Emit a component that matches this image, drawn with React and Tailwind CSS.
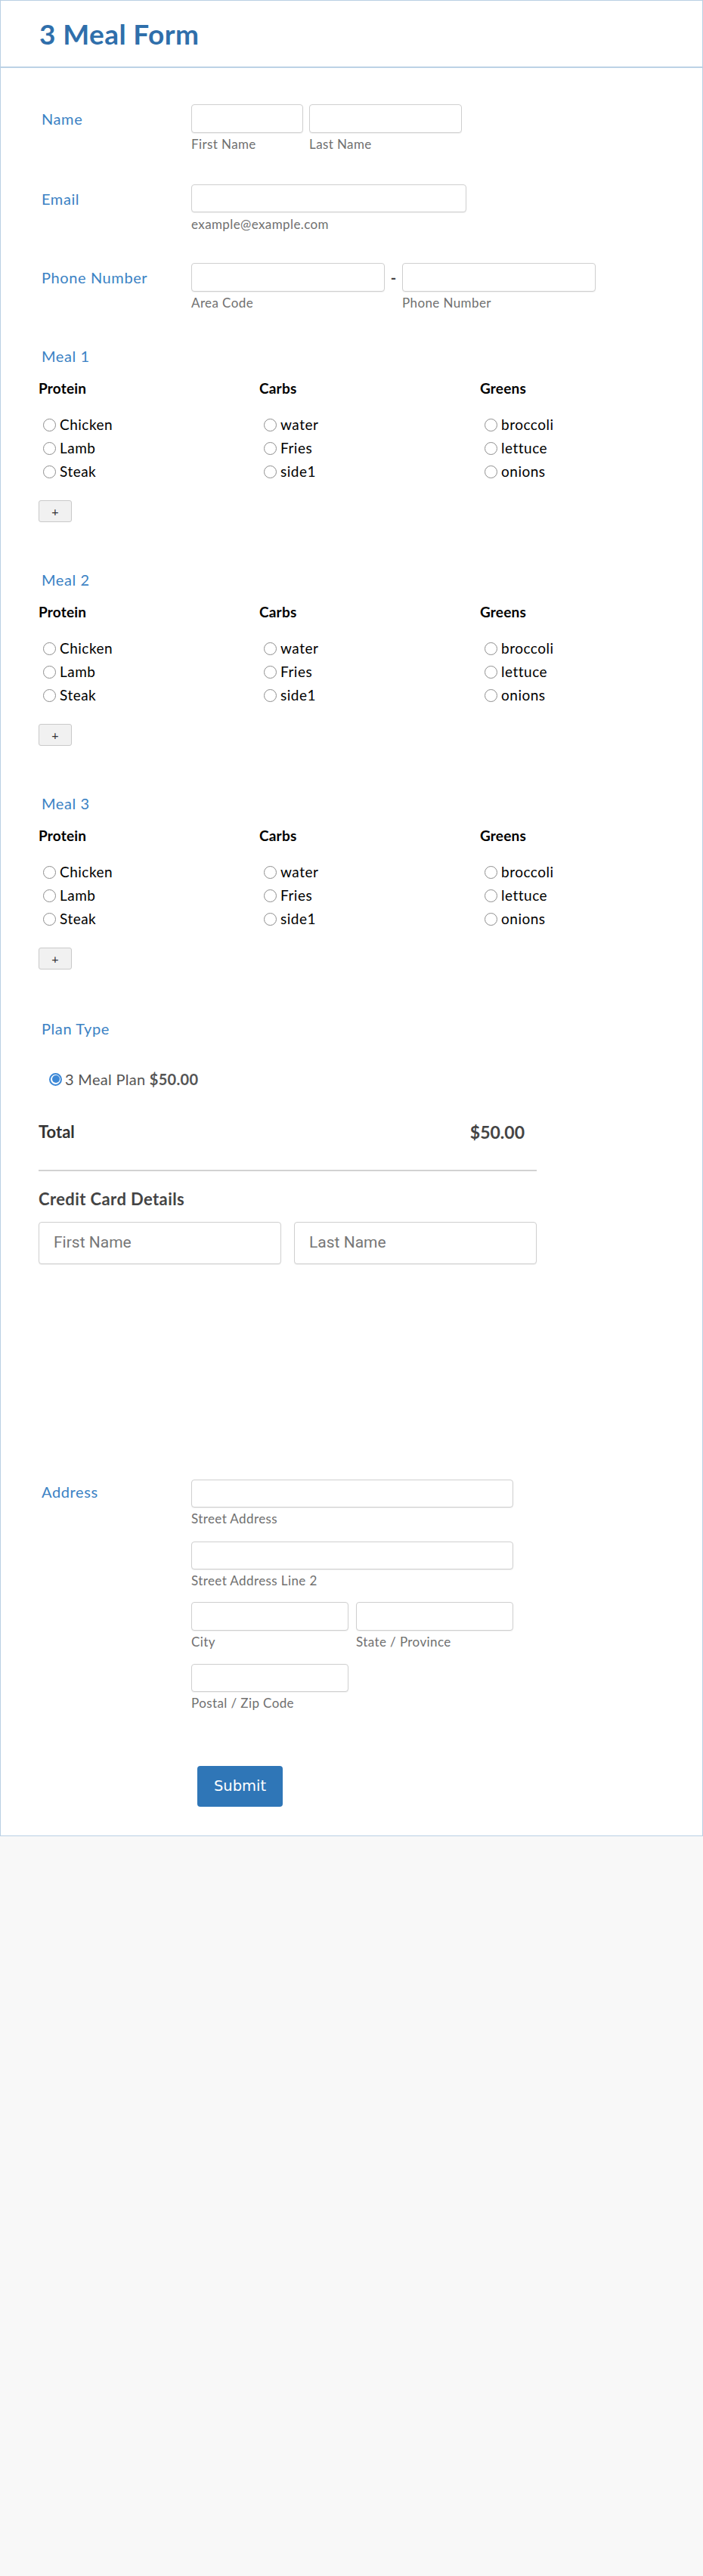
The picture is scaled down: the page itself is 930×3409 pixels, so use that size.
import React from 'react';

const inputCls = 'block bg-white border border-[#cfcfcf] rounded-[4px] shadow-[0_1px_1px_rgba(0,0,0,0.06)]';
const sub = 'block mt-[5px] text-[17px] leading-[20px] tracking-[0.4px] text-[#707070]';
const label = 'text-[20px] leading-[24px] tracking-[0.6px] text-[#3b82c4]';

function Radio() {
    return <span className="inline-block w-[17px] h-[17px] rounded-full border border-[#8d8d8d] bg-white shrink-0" />;
}

function Meal({ n, first }) {
    const cols = [
        { title: 'Protein', items: ['Chicken', 'Lamb', 'Steak'] },
        { title: 'Carbs', items: ['water', 'Fries', 'side1'] },
        { title: 'Greens', items: ['broccoli', 'lettuce', 'onions'] },
    ];
    return (
        <div className={first ? 'mt-[48px]' : 'mt-[64px]'}>
            <div className={`${label} pl-[54px]`}>Meal {n}</div>
            <div className="grid grid-cols-[292px_292px_292px] pl-[50px] mt-[19px]">
                {cols.map((c) => (
                    <div key={c.title}>
                        <div className="text-[19px] leading-[24px] font-bold tracking-[0.2px] text-black">{c.title}</div>
                        <div className="mt-[21px]">
                            {c.items.map((it) => (
                                <div key={it} className="flex items-center h-[31px] pl-[6px] gap-[5px] text-[19px] tracking-[0.5px] text-black">
                                    <Radio />
                                    <span>{it}</span>
                                </div>
                            ))}
                        </div>
                    </div>
                ))}
            </div>
            <button className="ml-[50px] mt-[22px] w-[44px] h-[29px] bg-[#f1f1f1] border border-[#c9c9c9] rounded-[3px] text-[16px] leading-none text-[#333] flex items-center justify-center">
                +
            </button>
        </div>
    );
}

export default function App() {
    return (
        <div className="min-h-[3409px] bg-[#f8f8f8] font-['Lato',sans-serif]">
            <div className="bg-white border border-[#b9cfe4] pb-[38px]">
                {/* Header */}
                <div className="h-[89px] border-b-2 border-[#bcd2e6] flex items-center pl-[51px]">
                    <h1 className="text-[37px] font-bold tracking-[0.4px] text-[#2f6fab] leading-none">3 Meal Form</h1>
                </div>

                {/* Name */}
                <div className="flex pl-[54px] mt-[48px]">
                    <div className={`w-[198px] mt-[7px] ${label}`}>Name</div>
                    <div className="flex gap-[8px]">
                        <div>
                            <div className={`${inputCls} w-[148px] h-[38px]`} />
                            <span className={sub}>First Name</span>
                        </div>
                        <div>
                            <div className={`${inputCls} w-[202px] h-[38px]`} />
                            <span className={sub}>Last Name</span>
                        </div>
                    </div>
                </div>

                {/* Email */}
                <div className="flex pl-[54px] mt-[43px]">
                    <div className={`w-[198px] mt-[7px] ${label}`}>Email</div>
                    <div>
                        <div className={`${inputCls} w-[364px] h-[37px]`} />
                        <span className={`${sub} mt-[6px]`}>example@example.com</span>
                    </div>
                </div>

                {/* Phone */}
                <div className="flex pl-[54px] mt-[41px]">
                    <div className={`w-[198px] mt-[7px] ${label}`}>Phone Number</div>
                    <div className="flex">
                        <div>
                            <div className={`${inputCls} w-[256px] h-[38px]`} />
                            <span className={sub}>Area Code</span>
                        </div>
                        <div className="w-[23px] h-[38px] flex items-center justify-center text-[20px] font-bold text-[#444]">-</div>
                        <div>
                            <div className={`${inputCls} w-[256px] h-[38px]`} />
                            <span className={sub}>Phone Number</span>
                        </div>
                    </div>
                </div>

                <Meal n={1} first />
                <Meal n={2} />
                <Meal n={3} />

                {/* Plan type */}
                <div className={`${label} pl-[54px] mt-[66px]`}>Plan Type</div>
                <div className="flex items-center gap-[4px] pl-[64px] mt-[43px] text-[20px] leading-[24px] tracking-[0.3px] text-[#555]">
                    <span className="w-[17px] h-[17px] rounded-full border-2 border-[#3d88d6] bg-white flex items-center justify-center">
                        <span className="w-[10px] h-[10px] rounded-full bg-[#3d88d6]" />
                    </span>
                    <span>
                        3 Meal Plan <b className="font-bold">$50.00</b>
                    </span>
                </div>

                {/* Total */}
                <div className="ml-[50px] w-[659px] mt-[45px] flex justify-between items-end pr-[16px] font-bold text-[#333]">
                    <span className="text-[22px] leading-[26px]">Total</span>
                    <span className="text-[23px] leading-[26px] text-[#444]">$50.00</span>
                </div>
                <div className="ml-[50px] w-[659px] mt-[37px] h-[2px] bg-[#d2d2d2]" />

                {/* Credit card */}
                <div className="ml-[50px] mt-[24px] text-[22px] leading-[26px] font-bold tracking-[0.4px] text-[#444]">Credit Card Details</div>
                <div className="ml-[50px] mt-[17px] flex gap-[17px]">
                    <div className={`${inputCls} w-[321px] h-[56px] flex items-center pl-[19px] text-[21px] text-[#777] font-['Roboto',sans-serif]`}>First Name</div>
                    <div className={`${inputCls} w-[321px] h-[56px] flex items-center pl-[19px] text-[21px] text-[#777] font-['Roboto',sans-serif]`}>Last Name</div>
                </div>

                {/* Address */}
                <div className="flex pl-[54px] mt-[285px]">
                    <div className={`w-[198px] mt-[4px] ${label}`}>Address</div>
                    <div>
                        <div className={`${inputCls} w-[426px] h-[37px]`} />
                        <span className={`${sub} mt-[4px]`}>Street Address</span>
                        <div className={`${inputCls} w-[426px] h-[37px] mt-[20px]`} />
                        <span className={sub}>Street Address Line 2</span>
                        <div className="flex gap-[10px] mt-[18px]">
                            <div>
                                <div className={`${inputCls} w-[208px] h-[38px]`} />
                                <span className={sub}>City</span>
                            </div>
                            <div>
                                <div className={`${inputCls} w-[208px] h-[38px]`} />
                                <span className={sub}>State / Province</span>
                            </div>
                        </div>
                        <div className={`${inputCls} w-[208px] h-[37px] mt-[19px]`} />
                        <span className={`${sub} mt-[4px]`}>Postal / Zip Code</span>
                        <button className="mt-[73px] ml-[8px] w-[113px] h-[54px] rounded-[4px] bg-[#2f76b7] text-white text-[19.5px] font-['DejaVu_Sans',sans-serif]">
                            Submit
                        </button>
                    </div>
                </div>
            </div>
        </div>
    );
}
